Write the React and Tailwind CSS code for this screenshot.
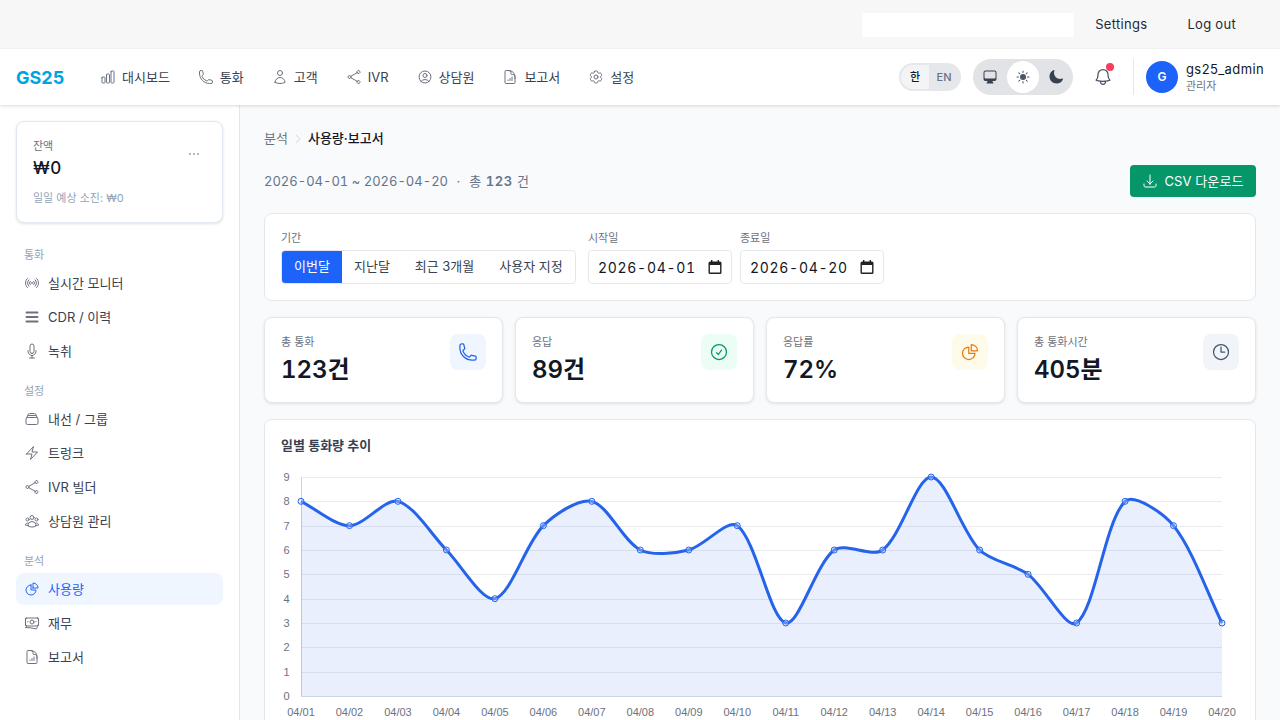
import React from "react";
import {
  HiOutlineChartBar, HiOutlinePhone, HiOutlineUser, HiOutlineShare, HiOutlineUserCircle,
  HiOutlineDocumentChartBar, HiOutlineCog6Tooth, HiOutlineSignal,
  HiOutlineMicrophone, HiOutlineRectangleStack, HiOutlineBolt, HiOutlineUserGroup,
  HiOutlineChartPie, HiOutlineBanknotes, HiOutlineBell, HiOutlineArrowDownTray,
  HiOutlineCheckCircle, HiOutlineClock, HiSun, HiComputerDesktop, HiMoon,
  HiEllipsisHorizontal, HiChevronRight,
} from "react-icons/hi2";

function StackIcon({ className }) {
  return (
    <svg viewBox="0 0 16 16" fill="none" stroke="currentColor" strokeWidth="2" strokeLinecap="round" className={className}>
      <path d="M2.5 3.5h11M2.5 8h11M2.5 12.5h11" />
    </svg>
  );
}

function CalendarIcon() {
  return (
    <svg viewBox="0 0 14 14" className="w-[14px] h-[14px] shrink-0 text-[#222]" fill="currentColor">
      <path d="M3 0h1.4v1.5h5.2V0H11v1.5h1A1.5 1.5 0 0 1 13.5 3v9.5A1.5 1.5 0 0 1 12 14H2a1.5 1.5 0 0 1-1.5-1.5V3A1.5 1.5 0 0 1 2 1.5h1V0Zm-1.1 5v7.2c0 .2.1.4.4.4h9.4c.3 0 .4-.2.4-.4V5H1.9Z" />
    </svg>
  );
}

const topNav = [
  [HiOutlineChartBar, "대시보드"], [HiOutlinePhone, "통화"], [HiOutlineUser, "고객"], [HiOutlineShare, "IVR"],
  [HiOutlineUserCircle, "상담원"], [HiOutlineDocumentChartBar, "보고서"], [HiOutlineCog6Tooth, "설정"],
];

const sections = [
  ["통화", [[HiOutlineSignal, "실시간 모니터"], [StackIcon, "CDR / 이력"], [HiOutlineMicrophone, "녹취"]]],
  ["설정", [[HiOutlineRectangleStack, "내선 / 그룹"], [HiOutlineBolt, "트렁크"], [HiOutlineShare, "IVR 빌더"], [HiOutlineUserGroup, "상담원 관리"]]],
  ["분석", [[HiOutlineChartPie, "사용량", true], [HiOutlineBanknotes, "재무"], [HiOutlineDocumentChartBar, "보고서"]]],
];

const stats = [
  ["총 통화", "123건", HiOutlinePhone, "bg-[#eff6ff]", "text-[#2563eb]"],
  ["응답", "89건", HiOutlineCheckCircle, "bg-[#ecfdf5]", "text-[#059669]"],
  ["응답률", "72%", HiOutlineChartPie, "bg-[#fffbeb]", "text-[#ea7a0c]"],
  ["총 통화시간", "405분", HiOutlineClock, "bg-[#f1f5f9]", "text-[#475569]"],
];

const data = [8, 7, 8, 6, 4, 7, 8, 6, 6, 7, 3, 6, 6, 9, 6, 5, 3, 8, 7, 3];
const X0 = 20, X1 = 941, Y0 = 12, Y1 = 231;
const px = (i) => X0 + (i * (X1 - X0)) / 19;
const py = (v) => Y1 - (v * (Y1 - Y0)) / 9;
const pts = data.map((v, i) => [px(i), py(v)]);
const clampY = (y) => Math.min(Y1, Math.max(Y0, y));

function spline() {
  const t = 0.3;
  const d = Math.hypot;
  const ctrl = pts.map((p, i) => {
    const a = pts[i - 1] || p, b = pts[i + 1] || p;
    const d01 = d(p[0] - a[0], p[1] - a[1]), d12 = d(b[0] - p[0], b[1] - p[1]);
    const s = d01 + d12 || 1;
    const fa = (t * d01) / s, fb = (t * d12) / s;
    return {
      prev: [p[0] - fa * (b[0] - a[0]), clampY(p[1] - fa * (b[1] - a[1]))],
      next: [p[0] + fb * (b[0] - a[0]), clampY(p[1] + fb * (b[1] - a[1]))],
    };
  });
  let s = `M${pts[0][0]} ${pts[0][1]}`;
  for (let i = 1; i < pts.length; i++) {
    const c1 = ctrl[i - 1].next, c2 = ctrl[i].prev;
    s += ` C${c1[0]} ${c1[1]} ${c2[0]} ${c2[1]} ${pts[i][0]} ${pts[i][1]}`;
  }
  return s;
}

function Chart() {
  const line = spline();
  return (
    <svg viewBox="0 0 958 262" className="block w-[958px] h-[262px]">
      {[0, 1, 2, 3, 4, 5, 6, 7, 8, 9].map((v) => (
        <g key={v}>
          <line x1={X0} x2={X1} y1={Math.round(py(v)) + 0.5} y2={Math.round(py(v)) + 0.5} stroke={v === 0 ? "#cbd5e1" : "#e9ebef"} />
          <text x={8.5} y={py(v) + 4} textAnchor="end" fontSize="11" fill="#6b7280" fontFamily="'Liberation Sans', sans-serif">{v}</text>
        </g>
      ))}
      <line x1={X0 + 0.5} x2={X0 + 0.5} y1={Y0} y2={Y1} stroke="#cbd5e1" />
      <path d={`${line} L${X1} ${Y1} L${X0} ${Y1} Z`} fill="rgba(37,99,235,0.1)" />
      <path d={line} fill="none" stroke="#2563eb" strokeWidth="3" />
      {pts.map((p, i) => (
        <circle key={i} cx={p[0]} cy={p[1]} r="3" fill="#c7d7f9" fillOpacity="0.35" stroke="#2563eb" strokeWidth="1" />
      ))}
      {data.map((_, i) => (
        <text key={i} x={px(i)} y={251} textAnchor="middle" fontSize="11" fill="#6b7280" fontFamily="'Liberation Sans', sans-serif">
          {`04/${String(i + 1).padStart(2, "0")}`}
        </text>
      ))}
    </svg>
  );
}

export default function App() {
  return (
    <div className="h-screen w-[1280px] overflow-hidden flex flex-col bg-[#f9fafb] text-[13px] text-[#111827] font-['Inter','Noto_Sans_CJK_KR',sans-serif]">
      <div className="h-[49px] shrink-0 bg-[#f7f7f7] flex items-center justify-end pr-[44px]">
        <div className="w-[212px] h-6 bg-white mr-[21px]" />
        <span className="text-[13px] mr-10 text-[#1f2937] tracking-[0.3px]">Settings</span>
        <span className="text-[13px] text-[#1f2937] tracking-[0.3px]">Log out</span>
      </div>

      <header className="h-14 shrink-0 bg-white shadow-[0_1px_3px_rgba(0,0,0,0.15)] relative z-10 flex items-center pl-4 pr-4">
        <span className="text-[18px] font-bold text-[#00a3e0] w-[84px]">GS25</span>
        <nav className="flex items-center gap-[28px]">
          {topNav.map(([Icon, label]) => (
            <div key={label} className="flex items-center gap-[6px] text-[#374151]">
              <Icon className="w-4 h-4 text-[#6b7280]" />
              <span className="pt-[2px]">{label}</span>
            </div>
          ))}
        </nav>
        <div className="ml-auto flex items-center">
          <div className="flex items-center h-7 w-[62px] rounded-full bg-[#e5e7eb] p-[2px] text-[11px] font-medium">
            <span className="w-7 h-6 rounded-l-full bg-[#f3f4f6] flex items-center justify-center text-[#111827]">한</span>
            <span className="flex-1 text-center text-[#6b7280]">EN</span>
          </div>
          <div className="ml-3 flex items-center h-9 w-[100px] rounded-full bg-[#e2e3e6] justify-between px-[1px]">
            <span className="w-8 h-8 flex items-center justify-center"><HiComputerDesktop className="w-4 h-4 text-[#374151]" /></span>
            <span className="w-8 h-8 rounded-full bg-white flex items-center justify-center"><HiSun className="w-4 h-4 text-[#4b5563]" /></span>
            <span className="w-8 h-8 flex items-center justify-center"><HiMoon className="w-4 h-4 text-[#374151]" /></span>
          </div>
          <div className="relative ml-5 w-5 h-5 text-[#4b5563]">
            <HiOutlineBell className="w-5 h-5" />
            <span className="absolute -top-[4px] -right-[1px] w-2 h-2 rounded-full bg-[#f43f5e]" />
          </div>
          <div className="ml-5 w-px h-9 bg-[#e5e7eb]" />
          <div className="ml-3 w-8 h-8 rounded-full bg-[#1d63fa] text-white text-[12px] font-semibold flex items-center justify-center">G</div>
          <div className="ml-2 flex flex-col w-[78px] whitespace-nowrap">
            <span className="text-[13px] leading-[18px] text-[#111827] tracking-[0.4px]">gs25_admin</span>
            <span className="text-[11px] leading-[16px] text-[#6b7280]">관리자</span>
          </div>
        </div>
      </header>

      <div className="flex flex-1 min-h-0">
        <aside className="w-[240px] shrink-0 bg-white border-r border-[#e5e7eb] p-4">
          <div className="h-[102px] rounded-lg bg-white border border-[#e2e8f0] shadow-[0_1px_3px_rgba(0,0,0,0.12)] pl-4 pr-5 pt-[17px] relative">
            <div className="text-[11px] leading-[14px] text-[#6b7280]">잔액</div>
            <div className="text-[17px] leading-6 font-medium mt-[3px] text-[#111827] tracking-[0.5px]">₩0</div>
            <div className="text-[11px] leading-[14px] text-[#94a3b8] mt-[11px]">일일 예상 소진: ₩0</div>
            <HiEllipsisHorizontal className="absolute right-[20px] top-[24px] w-[16px] h-[16px] text-[#94a3b8]" />
          </div>
          <div className="mt-[24px] flex flex-col">
            {sections.map(([title, items], si) => (
              <div key={title} className={si ? "mt-4" : ""}>
                <div className="pl-2 h-[16px] leading-[16px] text-[11px] text-[#94a3b8]">{title}</div>
                <div className="mt-1 flex flex-col gap-[2px]">
                  {items.map(([Icon, label, active]) => (
                    <div key={label} className={`h-8 rounded-lg flex items-center gap-[8px] pl-2 ${active ? "bg-[#eff6ff] text-[#1d63fa]" : "text-[#374151]"}`}>
                      <Icon className={`w-4 h-4 ${active ? "text-[#1d63fa]" : "text-[#6b7280]"}`} />
                      <span className="pt-[2px]">{label}</span>
                    </div>
                  ))}
                </div>
              </div>
            ))}
          </div>
        </aside>

        <main className="flex-1 min-w-0 px-6 pt-6">
          <div className="flex items-center h-5 text-[13px]">
            <span className="text-[#6b7280]">분석</span>
            <HiChevronRight className="w-3 h-3 mx-[4px] text-[#d1d5db]" />
            <span className="text-[#111827] font-medium">사용량·보고서</span>
          </div>
          <div className="mt-4 h-8 flex items-center justify-between">
            <div className="text-[13px] text-[#64748b] pt-[2px]">
              <span className="tabular-nums">2026-04-01 ~ 2026-04-20</span>
              <span className="tracking-[0.55px]"> &nbsp;·&nbsp; 총 <b className="font-semibold tabular-nums">123</b> 건</span>
            </div>
            <button className="h-8 w-[126px] rounded bg-[#059669] text-white text-[13px] flex items-center justify-center gap-[6px]">
              <HiOutlineArrowDownTray className="w-4 h-4" />
              <span className="pt-[2px] tracking-[0.1px]">CSV 다운로드</span>
            </button>
          </div>

          <section className="mt-4 h-[88px] rounded-lg bg-white border border-[#e5e7eb] px-4 pt-[16px] flex gap-2">
            <div className="w-[295px] mr-[4px]">
              <div className="text-[11px] leading-[16px] text-[#6b7280]">기간</div>
              <div className="mt-1 h-[34px] rounded border border-[#e5e7eb] flex text-[13px] text-[#374151] overflow-hidden">
                <span className="w-[60px] bg-[#1d63fa] text-white flex items-center justify-center">이번달</span>
                <span className="w-[60px] flex items-center justify-center">지난달</span>
                <span className="w-[85px] flex items-center justify-center">최근 3개월</span>
                <span className="flex-1 flex items-center justify-center">사용자 지정</span>
              </div>
            </div>
            {[["시작일", "2026-04-01"], ["종료일", "2026-04-20"]].map(([l, v]) => (
              <div key={l} className="w-[144px]">
                <div className="text-[11px] leading-[16px] text-[#6b7280]">{l}</div>
                <div className="mt-1 h-[34px] rounded border border-[#e5e7eb] bg-white flex items-center pl-[9px] pr-[9px]">
                  <input type="text" readOnly value={v} className="flex-1 min-w-0 outline-none bg-transparent text-[14px] tabular-nums tracking-[0.7px] text-[#111827]" />
                  <CalendarIcon />
                </div>
              </div>
            ))}
          </section>

          <section className="mt-4 grid grid-cols-4 gap-3">
            {stats.map(([label, value, Icon, bg, fg]) => (
              <div key={label} className="h-[86px] rounded-lg bg-white border border-[#e5e7eb] shadow-[0_1px_3px_rgba(0,0,0,0.1)] pl-4 pr-4 pt-4 flex justify-between">
                <div>
                  <div className="text-[11px] leading-[16px] text-[#6b7280]">{label}</div>
                  <div className="mt-1 text-[24px] leading-[32px] font-semibold text-[#111827] tabular-nums">{value}</div>
                </div>
                <div className={`w-9 h-9 rounded-lg flex items-center justify-center ${bg}`}>
                  <Icon className={`w-5 h-5 ${fg}`} />
                </div>
              </div>
            ))}
          </section>

          <section className="mt-4 rounded-lg bg-white border border-[#e5e7eb] px-4 pt-4 h-[330px]">
            <div className="text-[13px] leading-[18px] font-semibold text-[#374151]">일별 통화량 추이</div>
            <div className="mt-[11px]"><Chart /></div>
          </section>
        </main>
      </div>
    </div>
  );
}
